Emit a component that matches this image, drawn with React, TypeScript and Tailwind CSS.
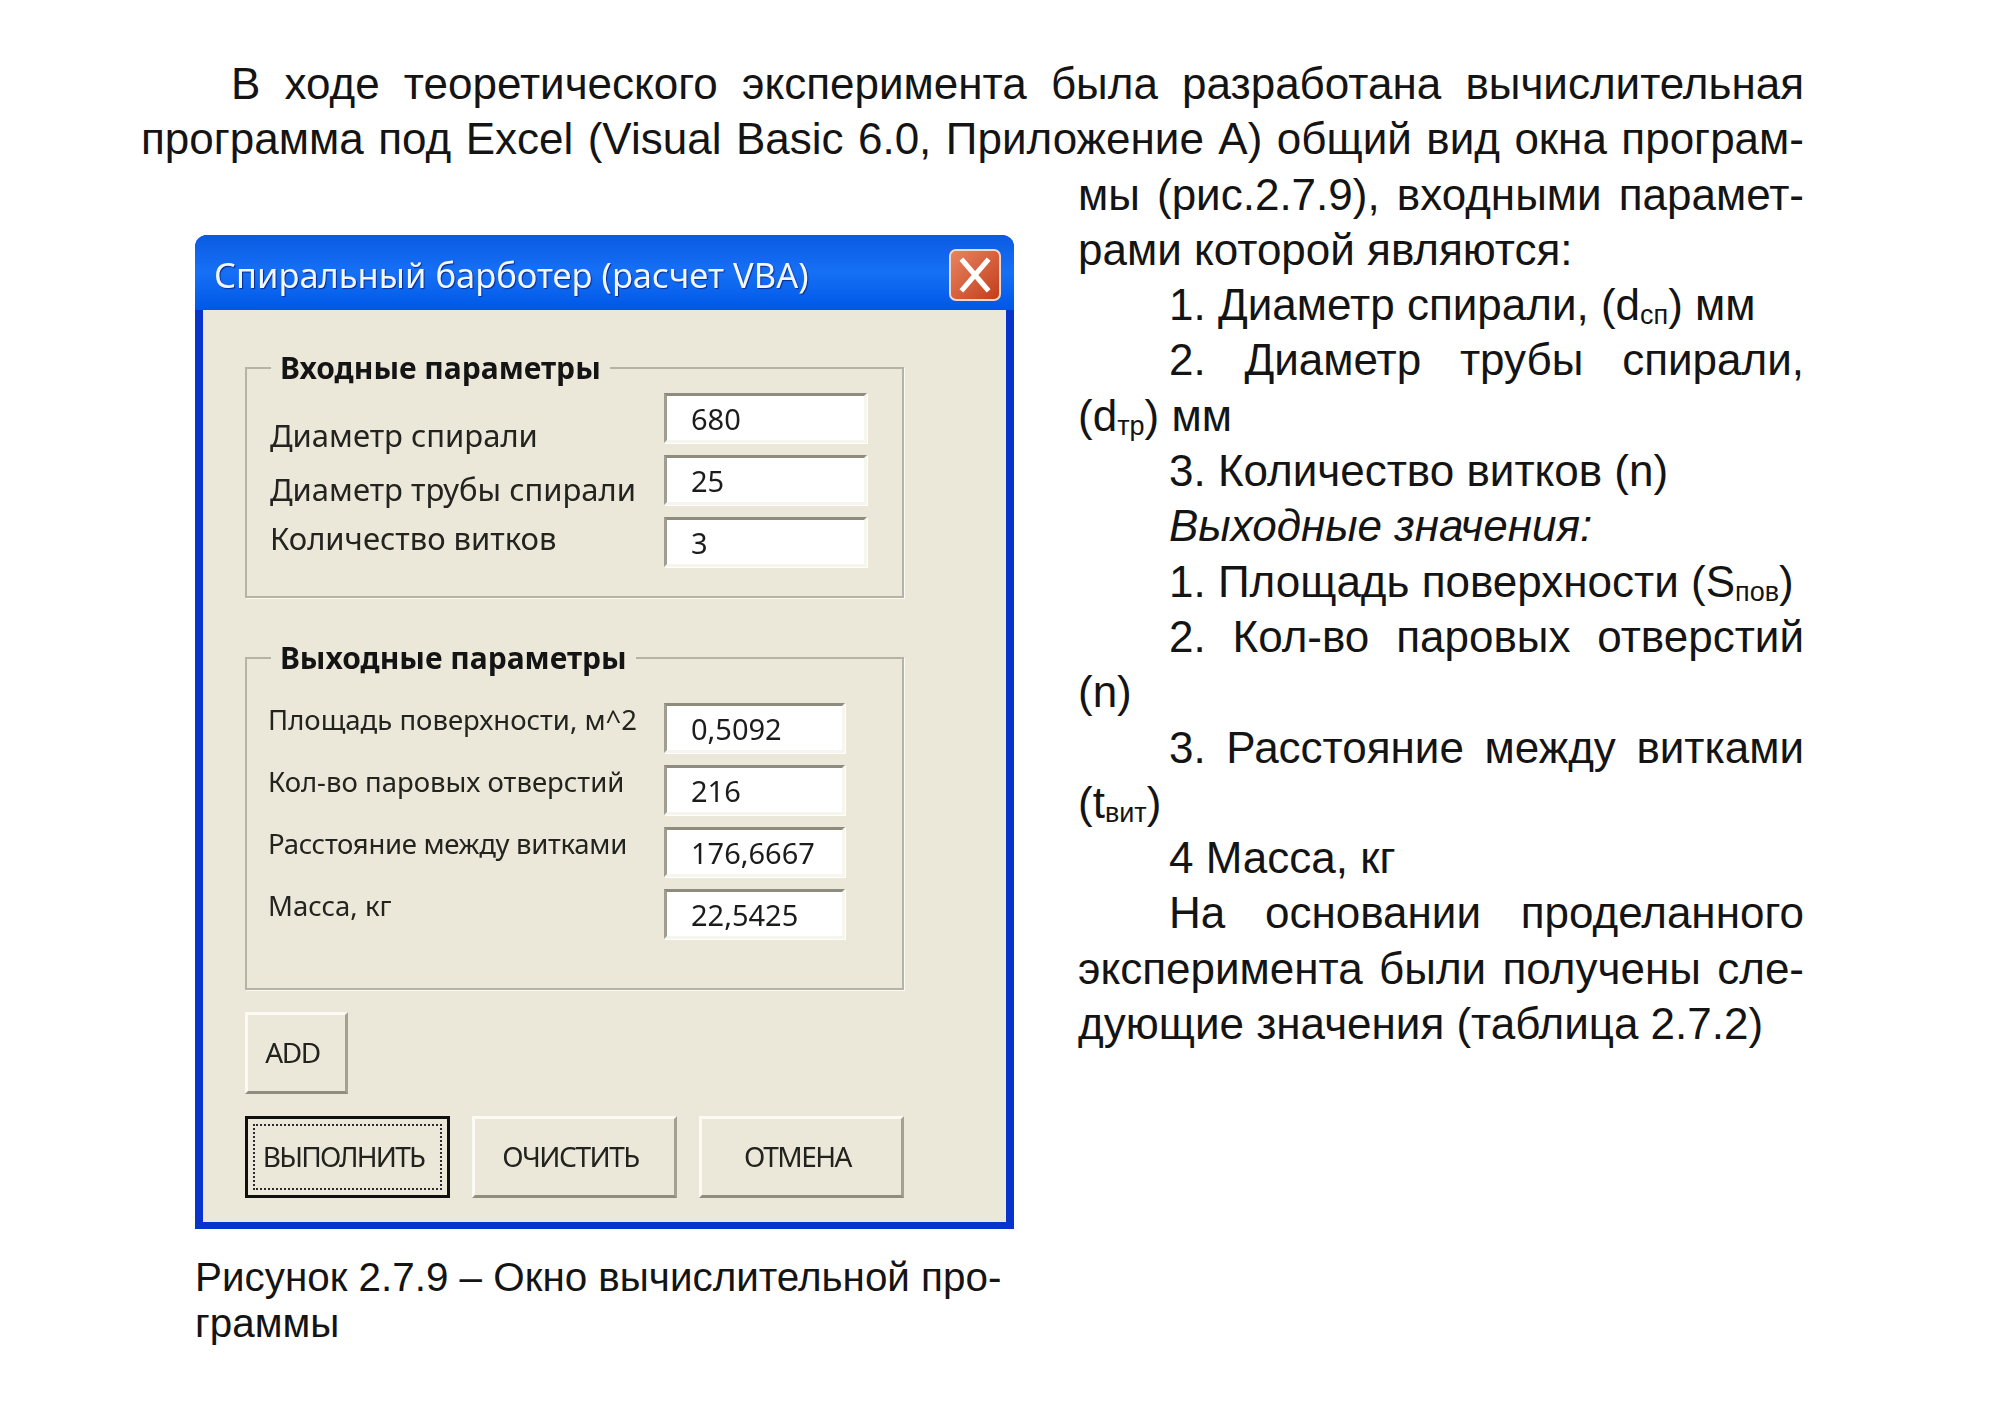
import React, { ReactNode } from 'react';
import clsx from 'clsx';

const tahoma = 'font-["Noto_Sans","DejaVu_Sans",sans-serif]';

function Line({ children, indent, justify }: { children: ReactNode; indent?: boolean; justify?: boolean }) {
	return (
		<div className={clsx('h-[55.3px] whitespace-nowrap', indent && 'pl-[91px]', justify && 'whitespace-normal text-justify [text-align-last:justify]')}>
			{children}
		</div>
	);
}

function Sub({ children }: { children: ReactNode }) {
	return <sub className="static align-[-4px] text-[27px] leading-none">{children}</sub>;
}

function Field({ label, value, small, labelClass }: { label: string; value: string; small?: boolean; labelClass?: string }) {
	return (
		<div className="flex h-[50px] items-start">
			<div className={clsx('w-[417px] shrink-0 whitespace-nowrap text-[#23231f]', small ? 'pl-[21px] text-[27.5px]' : 'pl-[23px] text-[31px]', labelClass)}>
				{label}
			</div>
			<div
				className={clsx(
					'h-[50px] border-[3px] border-t-[#8e8c7e] border-l-[#a09e90] border-r-[#f6f5ee] border-b-[#f6f5ee] bg-white pl-[24px] text-[29px] leading-[46px] text-[#1c1c1c] shadow-[1px_1px_0_#fff]',
					small ? 'w-[181px]' : 'w-[203px]',
				)}
			>
				{value}
			</div>
		</div>
	);
}

function Group({ title, children, className }: { title: string; children: ReactNode; className?: string }) {
	return (
		<fieldset className={clsx('border-2 border-[#b5b3a3] shadow-[1px_1px_0_#fbfaf4]', className)}>
			<legend className="ml-[24px] px-[9px] text-[30px] leading-[34px] font-bold text-[#141414]">{title}</legend>
			{children}
		</fieldset>
	);
}

function XpButton({ children, className, active }: { children: ReactNode; className?: string; active?: boolean }) {
	return (
		<button
			className={clsx(
				'flex items-center justify-center text-[28px] tracking-[-1.5px] text-[#22221e]',
				active
					? 'border-[3px] border-[#101010] p-[5px]'
					: 'border-[3px] border-t-[#fbfaf3] border-l-[#fbfaf3] border-r-[#a3a191] border-b-[#8f8d7e] pr-[8px]',
				className,
			)}
		>
			{active ? (
				<span className="flex h-full w-full items-center justify-center border-2 border-dotted border-[#2a2a2a] pr-[8px] tracking-[-1.8px]">{children}</span>
			) : (
				children
			)}
		</button>
	);
}

function Window() {
	return (
		<div className={clsx('w-[819px] overflow-hidden rounded-t-[12px] bg-[#0833cc] blur-[0.5px]', tahoma)}>
			<div className="flex h-[75px] items-center justify-between bg-gradient-to-b from-[#0a5be2] via-[#1670f5] to-[#0057e6] pt-[5px] pr-[13px] pl-[19px]">
				<span className="text-[34.5px] text-[#f2f6ff] [text-shadow:1px_1px_1px_#0a2a90]">Спиральный барботер (расчет VBA)</span>
				<div className="flex h-[52px] w-[52px] items-center justify-center rounded-[7px] border-2 border-[#f0d8cc] bg-gradient-to-br from-[#e8835f] to-[#c23c18]">
					<svg width="36" height="38" viewBox="0 0 36 38">
						<path d="M6 5 L30 33 M30 5 L6 33" stroke="#fff" strokeWidth="5" strokeLinecap="square" />
					</svg>
				</div>
			</div>
			<div className="mx-[8px] mb-[7px] flex h-[912px] flex-col bg-[#ebe8d9] pt-[41px] pr-[102px] pl-[42px]">
				<Group title="Входные параметры" className="h-[247px]">
					<div className="flex flex-col gap-[12px] pt-[8px]">
						<Field label="Диаметр спирали" value="680" labelClass="pt-[22px] leading-[40px]" />
						<Field label="Диаметр трубы спирали" value="25" labelClass="pt-[14px] leading-[40px]" />
						<Field label="Количество витков" value="3" labelClass="pt-[1px] leading-[40px]" />
					</div>
				</Group>
				<Group title="Выходные параметры" className="mt-[43px] h-[349px]">
					<div className="flex flex-col gap-[12px] pt-[28px]">
						<Field small label="Площадь поверхности, м^2" value="0,5092" labelClass="pt-[2px] leading-[30px]" />
						<Field small label="Кол-во паровых отверстий" value="216" labelClass="pt-[2px] leading-[30px]" />
						<Field small label="Расстояние между витками" value="176,6667" labelClass="pt-[2px] leading-[30px] tracking-[-0.3px]" />
						<Field small label="Масса, кг" value="22,5425" labelClass="pt-[2px] leading-[30px]" />
					</div>
				</Group>
				<XpButton className="mt-[22px] h-[82px] w-[103px]">ADD</XpButton>
				<div className="mt-[22px] flex gap-[22px]">
					<XpButton active className="h-[82px] w-[206px]">ВЫПОЛНИТЬ</XpButton>
					<XpButton className="h-[82px] w-[206px]">ОЧИСТИТЬ</XpButton>
					<XpButton className="h-[82px] w-[206px]">ОТМЕНА</XpButton>
				</div>
			</div>
		</div>
	);
}

export default function App() {
	return (
		<div className='h-[1414px] w-[2000px] overflow-hidden bg-white pt-[56px] pl-[141px] font-["Liberation_Sans",Arial,sans-serif] text-[44px] leading-[55.3px] text-[#141414]'>
			<div className="w-[1663px]">
				<div className="pl-[90px]">
					<Line justify>В ходе теоретического эксперимента была разработана вычислительная</Line>
				</div>
				<Line justify>программа под Excel (Visual Basic 6.0, Приложение А) общий вид окна програм-</Line>
			</div>
			<div className="flex">
				<div className="ml-[54px] w-[819px] shrink-0 pt-[68px]">
					<Window />
					<div className="mt-[25px] text-[40.4px] leading-[46px] whitespace-nowrap">
						<div>Рисунок 2.7.9 – Окно вычислительной про-</div>
						<div>граммы</div>
					</div>
				</div>
				<div className="ml-[64px] w-[726px]">
					<Line justify>мы (рис.2.7.9), входными парамет-</Line>
					<Line>рами которой являются:</Line>
					<Line indent>1. Диаметр спирали, (d<Sub>сп</Sub>) мм</Line>
					<div className="pl-[91px]"><Line justify>2. Диаметр трубы спирали,</Line></div>
					<Line>(d<Sub>тр</Sub>) мм</Line>
					<Line indent>3. Количество витков (n)</Line>
					<Line indent><em>Выходные значения:</em></Line>
					<Line indent>1. Площадь поверхности (S<Sub>пов</Sub>)</Line>
					<div className="pl-[91px]"><Line justify>2. Кол-во паровых отверстий</Line></div>
					<Line>(n)</Line>
					<div className="pl-[91px]"><Line justify>3. Расстояние между витками</Line></div>
					<Line>(t<Sub>вит</Sub>)</Line>
					<Line indent>4 Масса, кг</Line>
					<div className="pl-[91px]"><Line justify>На основании проделанного</Line></div>
					<Line justify>эксперимента были получены сле-</Line>
					<Line>дующие значения (таблица 2.7.2)</Line>
				</div>
			</div>
		</div>
	);
}
